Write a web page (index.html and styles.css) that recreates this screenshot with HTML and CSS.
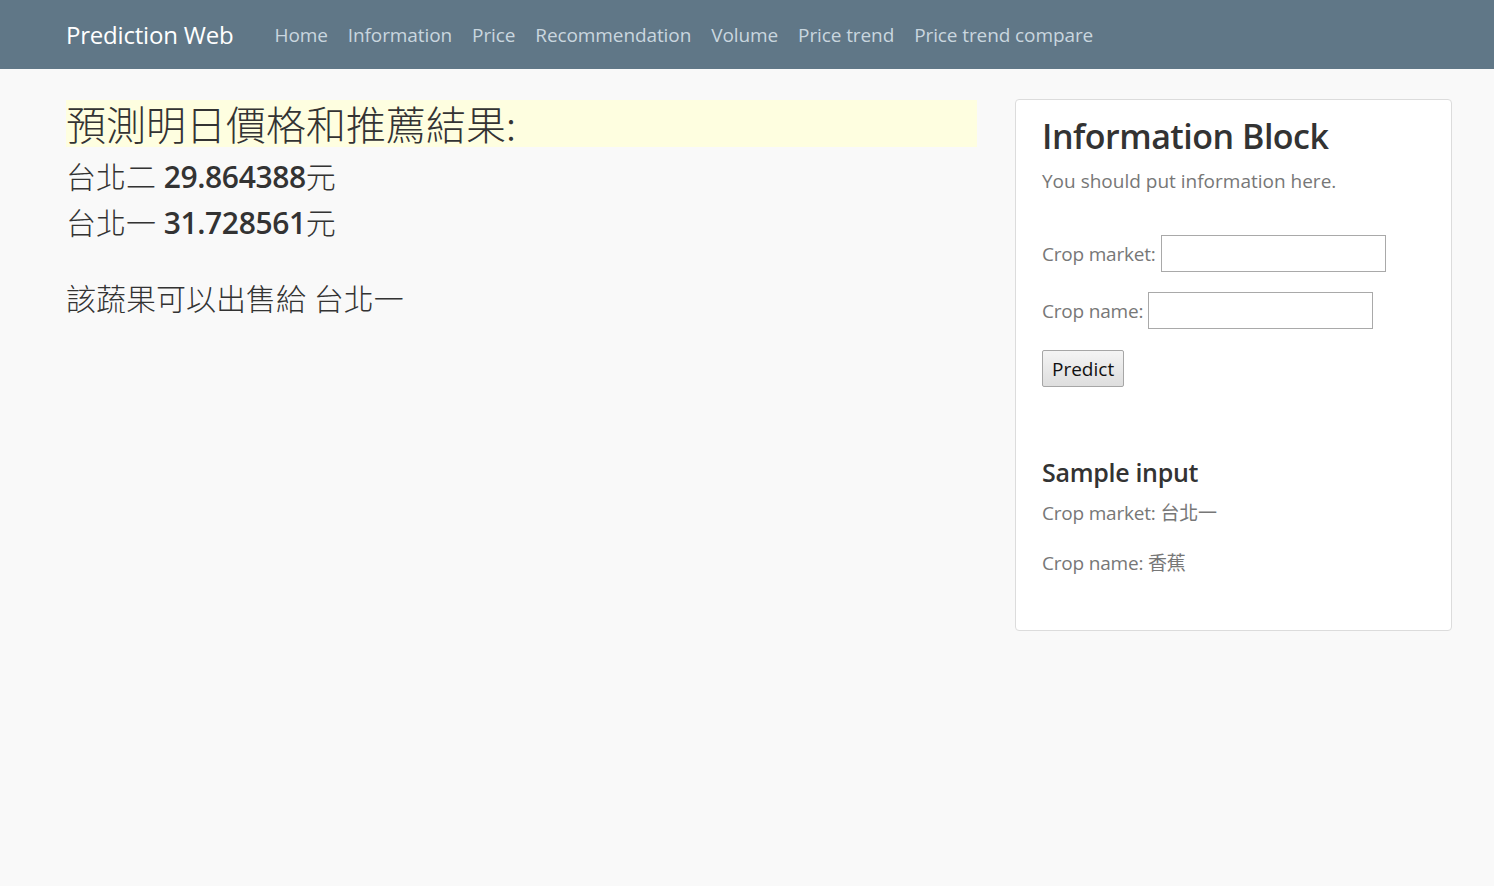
FILE: index.html
```html
<!DOCTYPE html>
<html lang="zh-Hant">
<head>
<meta charset="utf-8">
<title>Prediction Web</title>
<link rel="stylesheet" href="styles.css">
</head>
<body>
<nav class="navbar">
  <a class="brand" href="#">Prediction Web</a>
  <ul class="nav-links">
    <li><a href="#">Home</a></li>
    <li><a href="#">Information</a></li>
    <li><a href="#">Price</a></li>
    <li><a href="#">Recommendation</a></li>
    <li><a href="#">Volume</a></li>
    <li><a href="#">Price trend</a></li>
    <li><a href="#">Price trend compare</a></li>
  </ul>
</nav>
<main class="container">
  <section class="results">
    <h1 class="result-title">預測明日價格和推薦結果:</h1>
    <p class="price-line">台北二 <strong>29.864388</strong>元</p>
    <p class="price-line">台北一 <strong>31.728561</strong>元</p>
    <p class="recommend">該蔬果可以出售給 台北一</p>
  </section>
  <aside class="info-block">
    <h2 class="info-title">Information Block</h2>
    <p class="info-sub">You should put information here.</p>
    <form class="predict-form">
      <div class="form-row"><label>Crop market:</label><input type="text"></div>
      <div class="form-row"><label>Crop name:</label><input type="text"></div>
      <button type="button" class="btn">Predict</button>
    </form>
    <h3 class="sample-title">Sample input</h3>
    <p class="sample-line">Crop market: 台北一</p>
    <p class="sample-line">Crop name: 香蕉</p>
  </aside>
</main>
</body>
</html>
```
FILE: styles.css
```css
* { box-sizing: border-box; }
html, body { margin: 0; padding: 0; }
body {
  background: #f9f9f9;
  font-family: "Open Sans", "Noto Sans CJK TC", sans-serif;
  color: #333;
  min-height: 886px;
}
.navbar {
  height: 69px;
  background: #607787;
  display: flex;
  align-items: center;
  padding: 0 0 0 66px;
}
.brand {
  color: #fff;
  font-size: 24px;
  text-decoration: none;
  margin-right: 31px;
  letter-spacing: -0.2px;
}
.nav-links {
  list-style: none;
  margin: 0;
  padding: 0;
  display: flex;
}
.nav-links a {
  display: block;
  padding: 0 10px;
  color: #c9d6df;
  text-decoration: none;
  font-size: 19px;
  letter-spacing: -0.1px;
}
.container {
  display: flex;
  align-items: flex-start;
  padding: 30px 42px 0 66px;
  gap: 38px;
}
.results {
  flex: 1;
  padding-top: 1px;
}
.result-title {
  margin: 0;
  background: #fefee0;
  font-weight: 300;
  font-size: 40px;
  line-height: 47px;
  color: #333;
  font-family: "Noto Sans CJK TC", "Open Sans", sans-serif;
}
.price-line {
  margin: 11px 0 0;
  font-size: 30px;
  line-height: 38px;
  color: #333;
  font-weight: 300;
  font-family: "Open Sans", "Noto Sans CJK TC", sans-serif;
}
.price-line + .price-line { margin-top: 8px; }
.price-line strong { font-weight: 600; letter-spacing: -0.4px; }
.recommend {
  margin: 38px 0 0;
  font-size: 30px;
  line-height: 38px;
  font-weight: 300;
  color: #333;
}
.info-block {
  width: 437px;
  min-height: 532px;
  background: #fff;
  border: 1px solid #dcdcdc;
  border-radius: 4px;
  padding: 14px 26px 40px;
}
.info-title {
  margin: 0;
  font-size: 34px;
  font-weight: 600;
  line-height: 44px;
  color: #333;
  letter-spacing: -0.5px;
}
.info-sub {
  margin: 9px 0 0;
  font-size: 19px;
  color: #777;
  line-height: 28px;
}
.predict-form { margin-top: 40px; }
.form-row {
  display: flex;
  align-items: center;
  margin-bottom: 20px;
}
.form-row label {
  font-size: 19px;
  color: #777;
  margin-right: 5px;
  letter-spacing: -0.2px;
}
.form-row input {
  width: 225px;
  height: 37px;
  border: 1px solid #a9a9a9;
  background: #fff;
  border-radius: 0;
  padding: 0 4px;
}
.btn {
  height: 37px;
  margin-top: 1px;
  padding: 0 9px;
  font-family: "Open Sans", sans-serif;
  font-size: 19px;
  color: #111;
  background: linear-gradient(#f4f4f4, #dedede);
  border: 1px solid #a6a6a6;
  border-radius: 2px;
}
.sample-title {
  margin: 68px 0 0;
  font-size: 25px;
  font-weight: 600;
  line-height: 34px;
  color: #333;
  letter-spacing: -0.3px;
}
.sample-line {
  margin: 10px 0 0;
  font-size: 19px;
  color: #777;
  line-height: 28px;
  letter-spacing: -0.2px;
}
.sample-line + .sample-line { margin-top: 22px; }
```
